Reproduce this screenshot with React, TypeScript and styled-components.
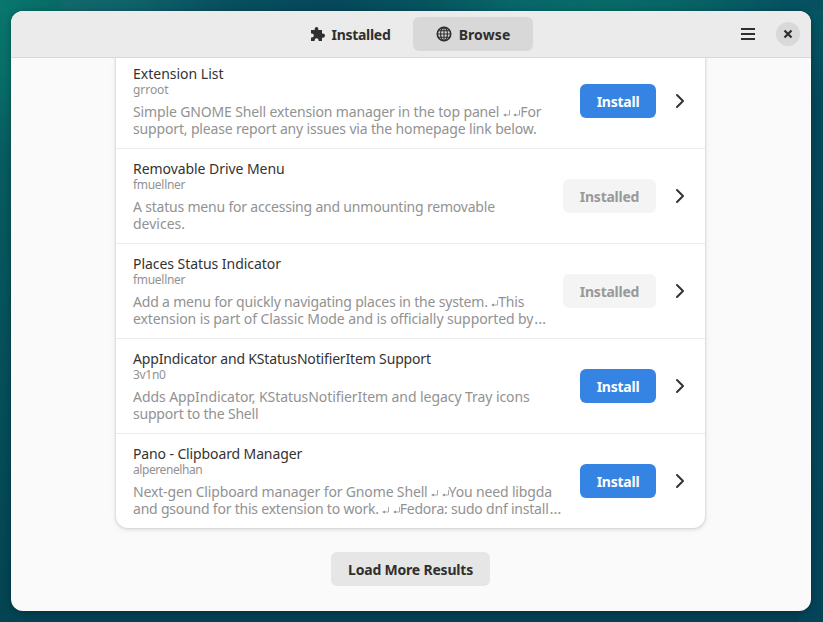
import React from "react";
import styled, { createGlobalStyle } from "styled-components";

const GlobalStyle = createGlobalStyle`
  * { box-sizing: border-box; }
  body { margin: 0; overflow: hidden; font-family: "Noto Sans", sans-serif; }
  button { font-family: inherit; }
`;

const Desktop = styled.div`
  width: 823px;
  height: 622px;
  padding: 11px 12px 11px 11px;
  background:
    linear-gradient(90deg, #08776d 0%, #076b66 7%, #12686a 8%, #0e626a 16%, #08505e 27%, #05485a 40%, #06545f 52%, #07666a 62%, #086b68 72%, #076566 82%, #065360 95%, #065060 100%) top / 100% 11px no-repeat,
    linear-gradient(180deg, #08776d 0%, #086e68 12%, #075c61 25%, #05505b 55%, #044352 100%) left / 24px 100% no-repeat,
    linear-gradient(180deg, #065763 0%, #04485a 16%, #054458 100%) right / 24px 100% no-repeat,
    #044152;
`;

const Window = styled.main`
  display: flex;
  flex-direction: column;
  width: 800px;
  height: 600px;
  overflow: hidden;
  border-radius: 12px;
  background: #fafafa;
  color: #333;
  box-shadow: 0 1px 7px rgba(0, 0, 0, 0.3);
`;

const Header = styled.header`
  display: grid;
  grid-template-columns: 1fr 242px 1fr;
  align-items: center;
  flex: none;
  height: 47px;
  background: #ebebeb;
  border-bottom: 1px solid #d8d8d8;
`;

const Tabs = styled.nav`
  grid-column: 2;
  display: flex;
  gap: 3px;
`;

const Tab = styled.button<{ $active?: boolean }>`
  display: flex;
  flex: none;
  align-items: center;
  justify-content: center;
  gap: ${(p) => (p.$active ? 7 : 6)}px;
  width: 120px;
  height: 34px;
  padding: 0;
  border: 0;
  border-radius: 6px;
  background: ${(p) => (p.$active ? "#d8d8d8" : "transparent")};
  color: #2f2f2f;
  font-size: 14px;
  font-weight: 700;
`;

const Controls = styled.div`
  display: flex;
  justify-content: flex-end;
  align-items: center;
  gap: 20px;
  padding-right: 11px;
`;

const PlainButton = styled.button`
  display: flex;
  padding: 0;
  border: 0;
  background: none;
`;

const CloseButton = styled(PlainButton)`
  align-items: center;
  justify-content: center;
  width: 24px;
  height: 24px;
  border-radius: 50%;
  background: #d9d9d9;
`;

const Content = styled.section`
  display: flex;
  flex-direction: column;
  align-items: center;
  flex: 1;
  min-height: 0;
  padding-right: 1px;
  overflow: hidden;
`;

const Card = styled.ul`
  flex: none;
  width: 589px;
  margin: -4px 0 24px;
  padding: 0;
  list-style: none;
  background: #fff;
  border-radius: 0 0 12px 12px;
  box-shadow: 0 0 0 1px rgba(0, 0, 0, 0.04), 0 1px 3px 1px rgba(0, 0, 0, 0.08), 0 2px 6px 2px rgba(0, 0, 0, 0.03);
`;

const Row = styled.li`
  display: flex;
  align-items: center;
  height: 95px;
  padding: 0 17px;
  border-bottom: 1px solid #ebebeb;
  &:last-child { border-bottom: 0; height: 94px; }
`;

const Info = styled.div`
  flex: 1;
  min-width: 0;
  height: 94px;
  padding-top: 11px;
  white-space: nowrap;
`;

const Fit = styled.span<{ $ls: number }>`
  letter-spacing: ${(p) => p.$ls}px;
`;

const Title = styled.div`
  height: 18px;
  line-height: 18px;
  font-size: 14px;
  color: #333;
`;

const Author = styled.div`
  height: 15px;
  line-height: 14px;
  font-size: 12px;
  color: #929292;
`;

const Description = styled.div`
  margin-top: 5px;
  line-height: 17px;
  font-size: 14px;
  color: #929292;
`;

const Line = styled.div`
  height: 17px;
`;

const Ellipsis = styled.span`
  margin-left: 1px;
  font-size: 15px;
  line-height: 0;
`;

const InstallButton = styled.button<{ $installed: boolean }>`
  flex: none;
  width: ${(p) => (p.$installed ? 93 : 76)}px;
  height: 34px;
  padding: 1px 0 0;
  border: 0;
  border-radius: 6px;
  background: ${(p) => (p.$installed ? "#f4f4f4" : "#3584e4")};
  color: ${(p) => (p.$installed ? "#999" : "#fff")};
  font-size: 14px;
  font-weight: 700;
  letter-spacing: -0.25px;
`;

const LoadMore = styled.button`
  flex: none;
  width: 159px;
  height: 34px;
  padding: 1px 0 0;
  border: 0;
  border-radius: 6px;
  background: #e6e6e6;
  color: #2f2f2f;
  font-size: 14px;
  font-weight: 700;
  letter-spacing: -0.2px;
`;

const ChevronBox = styled.svg`
  flex: none;
  margin: 0 0 0 16px;
`;

const ReturnIcon = styled.svg`
  display: inline-block;
  vertical-align: 0;
`;

const Puzzle = () => (
  <svg width="16" height="16" viewBox="0 0 16 16" fill="#2f2f2f">
    <path d="M1 4h3.9A2.2 2.2 0 0 1 6.5 1a2.2 2.2 0 0 1 1.7 3H12v3.6h.9a2.1 2.1 0 0 1 0 4.2H12V15H8.6v-.7a2 2 0 0 0-4 0V15H1v-3.4h.8a2 2 0 0 0 0-4H1z" />
  </svg>
);

const Globe = () => (
  <svg width="16" height="16" viewBox="0 0 16 16" fill="none" stroke="#2f2f2f">
    <circle cx="8" cy="8" r="6.7" strokeWidth="1.7" />
    <ellipse cx="8" cy="8" rx="3.4" ry="6.7" strokeWidth="1.2" />
    <path d="M8 1v14M1 8h14M2 4.8h12M2 11.2h12" strokeWidth="1.1" />
  </svg>
);

const Chevron = () => (
  <ChevronBox width="16" height="16" viewBox="0 0 16 16" fill="none" stroke="#333" strokeWidth="2" strokeLinecap="round" strokeLinejoin="round">
    <path d="M5 2l6 6-6 6" />
  </ChevronBox>
);

const Return = () => (
  <ReturnIcon width="7" height="8" viewBox="0 0 7 8">
    <path d="M6.5 1v5H2" fill="none" stroke="#a0a0a0" strokeWidth="0.9" />
    <path d="M0 6l3-1.6v3.2z" fill="#929292" />
  </ReturnIcon>
);

// Each entry is one line of text and its tracking; "↵" stands for a line-break mark.
type Text = [string, number];

interface Extension {
  title: Text;
  author: Text;
  lines: Text[];
  installed: boolean;
}

const extensions: Extension[] = [
  { title: ["Extension List", 0], author: ["grroot", -0.05], installed: false,
    lines: [["Simple GNOME Shell extension manager in the top panel ↵ ↵For", -0.14], ["support, please report any issues via the homepage link below.", -0.155]] },
  { title: ["Removable Drive Menu", -0.06], author: ["fmuellner", -0.3], installed: true,
    lines: [["A status menu for accessing and unmounting removable", -0.2], ["devices.", 0]] },
  { title: ["Places Status Indicator", -0.05], author: ["fmuellner", -0.3], installed: true,
    lines: [["Add a menu for quickly navigating places in the system. ↵This", -0.19], ["extension is part of Classic Mode and is officially supported by…", -0.1]] },
  { title: ["AppIndicator and KStatusNotifierItem Support", -0.16], author: ["3v1n0", -0.3], installed: false,
    lines: [["Adds AppIndicator, KStatusNotifierItem and legacy Tray icons", -0.07], ["support to the Shell", -0.2]] },
  { title: ["Pano - Clipboard Manager", -0.12], author: ["alperenelhan", -0.42], installed: false,
    lines: [["Next-gen Clipboard manager for Gnome Shell ↵ ↵You need libgda", -0.15], ["and gsound for this extension to work. ↵ ↵Fedora: sudo dnf install…", -0.21]] },
];

const FitText = ({ text: [value, spacing] }: { text: Text }) => (
  <Fit $ls={spacing}>
    {value.replace("…", "").split("↵").map((part, i) => (
      <React.Fragment key={i}>
        {i > 0 && <Return />}
        {part}
      </React.Fragment>
    ))}
    {value.endsWith("…") && <Ellipsis>…</Ellipsis>}
  </Fit>
);

export default function App() {
  return (
    <Desktop>
      <GlobalStyle />
      <Window>
        <Header>
          <Tabs>
            <Tab><Puzzle /><Fit $ls={-0.3}>Installed</Fit></Tab>
            <Tab $active><Globe /><Fit $ls={0.1}>Browse</Fit></Tab>
          </Tabs>
          <Controls>
            <PlainButton aria-label="Menu">
              <svg width="16" height="16" viewBox="0 0 16 16" fill="#2f2f2f">
                <path d="M1 2h14v2H1zM1 7h14v2H1zM1 12h14v2H1z" />
              </svg>
            </PlainButton>
            <CloseButton aria-label="Close">
              <svg width="16" height="16" viewBox="0 0 16 16" stroke="#2f2f2f" strokeWidth="2.2">
                <path d="M4.5 4.5l7 7M11.5 4.5l-7 7" />
              </svg>
            </CloseButton>
          </Controls>
        </Header>
        <Content>
          <Card>
            {extensions.map((ext) => (
              <Row key={ext.title[0]}>
                <Info>
                  <Title><FitText text={ext.title} /></Title>
                  <Author><FitText text={ext.author} /></Author>
                  <Description>
                    {ext.lines.map((line) => <Line key={line[0]}><FitText text={line} /></Line>)}
                  </Description>
                </Info>
                <InstallButton $installed={ext.installed}>{ext.installed ? "Installed" : "Install"}</InstallButton>
                <Chevron />
              </Row>
            ))}
          </Card>
          <LoadMore>Load More Results</LoadMore>
        </Content>
      </Window>
    </Desktop>
  );
}
